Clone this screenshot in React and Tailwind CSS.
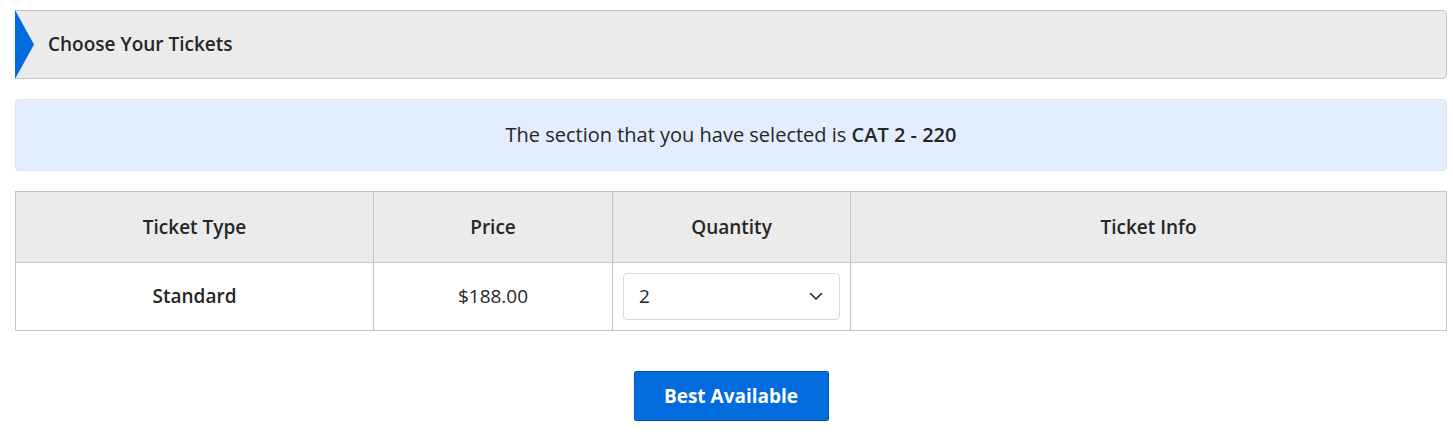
import React from "react";

const font = { fontFamily: "'Open Sans', 'Noto Sans', sans-serif" };

const App = () => {
  return (
    <div className="bg-white w-[1453px] h-[437px] pt-[10px] pl-[15px] pr-[6px] text-[#262626]" style={font}>
      {/* Section header */}
      <div className="relative h-[69px] bg-[#ebebeb] border border-[#c4c4c4] rounded-r-[4px] flex items-center pl-[32px]">
        <svg className="absolute left-[-1px] top-[-1px]" width="20" height="69" viewBox="0 0 20 69">
          <polygon points="0,0 19,34.5 0,69" fill="#026cdf" />
        </svg>
        <h2 className="text-[19px] font-semibold">Choose Your Tickets</h2>
      </div>

      {/* Selected section notice */}
      <div className="mt-[20px] h-[72px] bg-[#e2eefd] border border-[#d6e5fa] rounded-[4px] flex items-center justify-center text-[20px]">
        <p>
          The section that you have selected is <span className="font-semibold">CAT 2 - 220</span>
        </p>
      </div>

      {/* Tickets table */}
      <table className="mt-[20px] w-full border-collapse table-fixed text-[19px]">
        <thead>
          <tr className="bg-[#ebebeb] h-[71px]">
            <th className="w-[358px] border border-[#c4c4c4] font-semibold">Ticket Type</th>
            <th className="w-[239px] border border-[#c4c4c4] font-semibold">Price</th>
            <th className="w-[238px] border border-[#c4c4c4] font-semibold">Quantity</th>
            <th className="border border-[#c4c4c4] font-semibold">Ticket Info</th>
          </tr>
        </thead>
        <tbody>
          <tr className="h-[68px]">
            <td className="border border-[#c4c4c4] text-center font-semibold">Standard</td>
            <td className="border border-[#c4c4c4] text-center">$188.00</td>
            <td className="border border-[#c4c4c4] px-[10px]">
              <div className="h-[47px] border border-[#d9d9d9] rounded-[4px] flex items-center justify-between pl-[15px] pr-[16px]">
                <span>2</span>
                <svg width="14" height="9" viewBox="0 0 14 9" fill="none">
                  <path d="M1.5 1.5 L7 7 L12.5 1.5" stroke="#262626" strokeWidth="1.6" strokeLinecap="round" strokeLinejoin="round" />
                </svg>
              </div>
            </td>
            <td className="border border-[#c4c4c4]"></td>
          </tr>
        </tbody>
      </table>

      <div className="mt-[40px] flex justify-center">
        <button className="w-[195px] h-[50px] bg-[#026cdf] border border-[#0457b8] rounded-[2px] text-white text-[19px] font-bold">
          Best Available
        </button>
      </div>
    </div>
  );
};

export default App;
